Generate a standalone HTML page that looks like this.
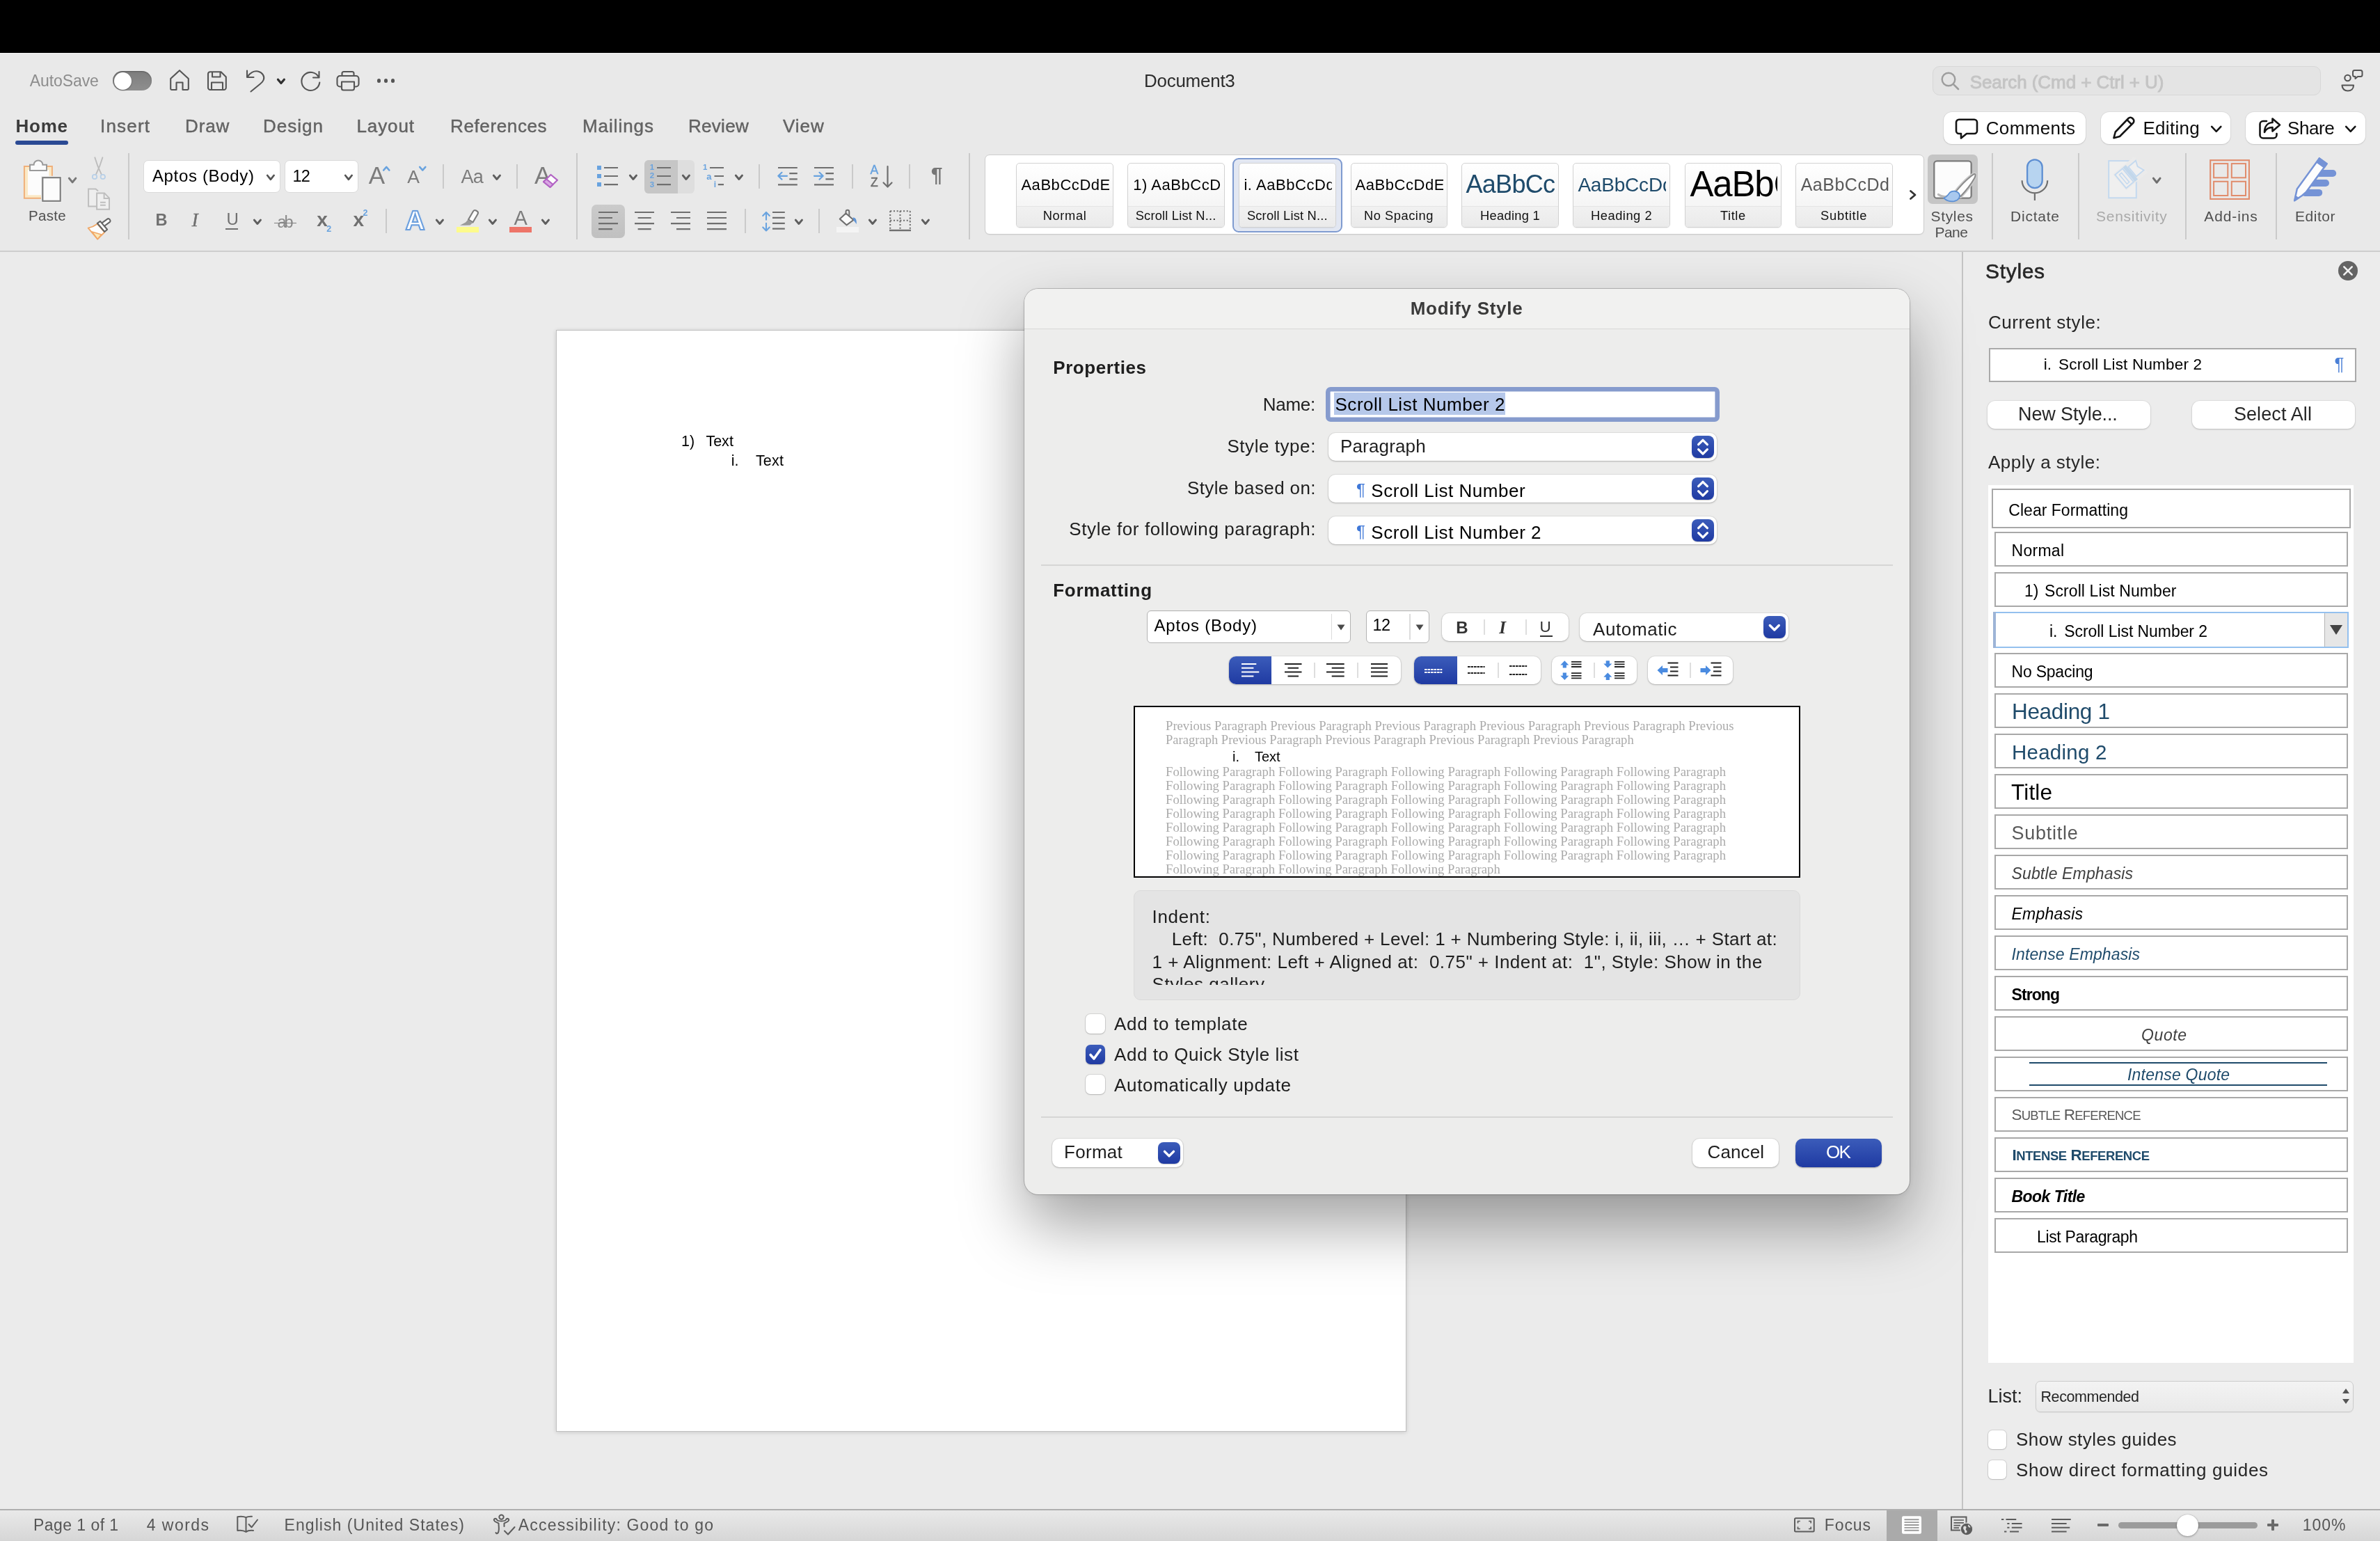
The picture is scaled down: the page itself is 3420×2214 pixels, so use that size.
<!DOCTYPE html>
<html lang="en"><head><meta charset="utf-8"><title>Document3 - Modify Style</title>
<style>
html,body{margin:0;padding:0}
body{width:3420px;height:2214px;position:relative;overflow:hidden;background:#ebebeb;font-family:"Liberation Sans",sans-serif;-webkit-font-smoothing:antialiased;will-change:transform}
body div,body span,body svg{position:absolute;box-sizing:border-box}
span{display:block}
svg{overflow:visible}
</style></head><body>
<div style="left:0px;top:76px;width:3420px;height:286px;background:#e9e9e9;border-top:1px solid #f7f7f7;border-bottom:2px solid #cdcdcd"></div>
<div style="left:0px;top:0px;width:3420px;height:76px;background:#000"></div>
<div style="left:0px;top:362px;width:2819px;height:1806px;background:#ebebeb"></div>
<div style="left:799px;top:474px;width:1222px;height:1583px;background:#fff;border:1px solid #c0c0c0;box-shadow:0 1px 6px rgba(0,0,0,.15)"></div>
<span style="left:979.00px;top:624.10px;font-size:21.5px;line-height:21.5px;color:#000;white-space:pre;">1)</span>
<span style="left:1014.40px;top:624.10px;font-size:21.5px;line-height:21.5px;color:#000;white-space:pre;letter-spacing:0.013px;">Text</span>
<span style="left:1050.70px;top:652.10px;font-size:21.5px;line-height:21.5px;color:#000;white-space:pre;">i.</span>
<span style="left:1085.90px;top:652.10px;font-size:21.5px;line-height:21.5px;color:#000;white-space:pre;letter-spacing:0.180px;">Text</span>
<span style="left:42.70px;top:104.53px;font-size:23px;line-height:23px;color:#8d8d8d;white-space:pre;letter-spacing:-0.074px;">AutoSave</span>
<span style="left:1644.00px;top:103.49px;font-size:26px;line-height:26px;color:#2d2d2d;white-space:pre;letter-spacing:-0.270px;">Document3</span>
<div style="left:2776.6px;top:94.7px;width:558.8px;height:42.3px;background:#e4e4e4;border:1.5px solid #d7d7d7;border-radius:10px"></div>
<span style="left:2830.70px;top:104.59px;font-size:26px;line-height:26px;color:#c4c4c4;white-space:pre;letter-spacing:-0.072px;-webkit-text-stroke:0.9px #c4c4c4;">Search (Cmd + Ctrl + U)</span>
<span style="left:22.50px;top:168.19px;font-size:26px;line-height:26px;color:#3c3c3c;white-space:pre;font-weight:700;letter-spacing:0.740px;">Home</span>
<span style="left:144.00px;top:168.19px;font-size:26px;line-height:26px;color:#636363;white-space:pre;letter-spacing:1.200px;-webkit-text-stroke:0.45px #636363;">Insert</span>
<span style="left:266.00px;top:168.19px;font-size:26px;line-height:26px;color:#636363;white-space:pre;letter-spacing:0.887px;-webkit-text-stroke:0.45px #636363;">Draw</span>
<span style="left:378.00px;top:168.19px;font-size:26px;line-height:26px;color:#636363;white-space:pre;letter-spacing:1.028px;-webkit-text-stroke:0.45px #636363;">Design</span>
<span style="left:512.50px;top:168.19px;font-size:26px;line-height:26px;color:#636363;white-space:pre;letter-spacing:0.900px;-webkit-text-stroke:0.45px #636363;">Layout</span>
<span style="left:647.00px;top:168.19px;font-size:26px;line-height:26px;color:#636363;white-space:pre;letter-spacing:0.627px;-webkit-text-stroke:0.45px #636363;">References</span>
<span style="left:837.00px;top:168.19px;font-size:26px;line-height:26px;color:#636363;white-space:pre;letter-spacing:0.940px;-webkit-text-stroke:0.45px #636363;">Mailings</span>
<span style="left:989.00px;top:168.19px;font-size:26px;line-height:26px;color:#636363;white-space:pre;letter-spacing:0.292px;-webkit-text-stroke:0.45px #636363;">Review</span>
<span style="left:1125.00px;top:168.19px;font-size:26px;line-height:26px;color:#636363;white-space:pre;letter-spacing:0.947px;-webkit-text-stroke:0.45px #636363;">View</span>
<div style="left:22px;top:202px;width:76px;height:5.5px;background:#2b4a94;border-radius:3px"></div>
<div style="left:2793px;top:161px;width:203.5px;height:45.5px;background:#fff;border-radius:12px;box-shadow:0 0 0 1px rgba(0,0,0,.05),0 1px 2px rgba(0,0,0,.10)"></div>
<div style="left:3019px;top:161px;width:185.5px;height:45.5px;background:#fff;border-radius:12px;box-shadow:0 0 0 1px rgba(0,0,0,.05),0 1px 2px rgba(0,0,0,.10)"></div>
<div style="left:3227px;top:161px;width:171.6px;height:45.5px;background:#fff;border-radius:12px;box-shadow:0 0 0 1px rgba(0,0,0,.05),0 1px 2px rgba(0,0,0,.10)"></div>
<span style="left:2853.70px;top:171.19px;font-size:26px;line-height:26px;color:#0c0c0c;white-space:pre;letter-spacing:0.374px;">Comments</span>
<span style="left:3079.50px;top:171.19px;font-size:26px;line-height:26px;color:#0c0c0c;white-space:pre;letter-spacing:0.273px;">Editing</span>
<span style="left:3287.00px;top:171.19px;font-size:26px;line-height:26px;color:#0c0c0c;white-space:pre;letter-spacing:-0.405px;">Share</span>
<div style="left:184.25px;top:220px;width:1.5px;height:123.5px;background:#cacaca"></div>
<div style="left:828.25px;top:220px;width:1.5px;height:123.5px;background:#cacaca"></div>
<div style="left:1392.25px;top:220px;width:1.5px;height:123.5px;background:#cacaca"></div>
<div style="left:2862.25px;top:220px;width:1.5px;height:123.5px;background:#cacaca"></div>
<div style="left:2986.25px;top:220px;width:1.5px;height:123.5px;background:#cacaca"></div>
<div style="left:3140.25px;top:220px;width:1.5px;height:123.5px;background:#cacaca"></div>
<div style="left:3270.25px;top:220px;width:1.5px;height:123.5px;background:#cacaca"></div>
<div style="left:636.45px;top:236.4px;width:1.5px;height:35.1px;background:#cacaca"></div>
<div style="left:742.25px;top:236.4px;width:1.5px;height:35.1px;background:#cacaca"></div>
<div style="left:1090.25px;top:236.4px;width:1.5px;height:35.1px;background:#cacaca"></div>
<div style="left:1224.25px;top:236.4px;width:1.5px;height:35.1px;background:#cacaca"></div>
<div style="left:1306.15px;top:236.4px;width:1.5px;height:35.1px;background:#cacaca"></div>
<div style="left:554.25px;top:300px;width:1.5px;height:35px;background:#cacaca"></div>
<div style="left:1070.25px;top:300px;width:1.5px;height:35px;background:#cacaca"></div>
<div style="left:1176.25px;top:300px;width:1.5px;height:35px;background:#cacaca"></div>
<span style="left:41.00px;top:300.04px;font-size:20.5px;line-height:20.5px;color:#4f4f4f;white-space:pre;letter-spacing:0.280px;">Paste</span>
<div style="left:206.4px;top:230.4px;width:197px;height:46.6px;background:#fff;border:1px solid #dadada;border-radius:7px"></div>
<div style="left:408.7px;top:230.4px;width:106.5px;height:46.6px;background:#fff;border:1px solid #dadada;border-radius:7px"></div>
<span style="left:218.90px;top:241.48px;font-size:24px;line-height:24px;color:#000;white-space:pre;letter-spacing:0.662px;">Aptos (Body)</span>
<span style="left:420.40px;top:241.90px;font-size:23.5px;line-height:23.5px;color:#000;white-space:pre;letter-spacing:-0.600px;">12</span>
<div style="left:925.8px;top:230px;width:71.9px;height:47.9px;background:#dedede;border-radius:6px"></div>
<div style="left:925.8px;top:230px;width:48px;height:47.9px;background:#c6c6c6;border-radius:6px 0 0 6px"></div>
<div style="left:850.2px;top:293.7px;width:47.6px;height:48px;background:linear-gradient(#cbcbcb,#c0c0c0);border-radius:7px"></div>
<div style="left:1414.6px;top:222.3px;width:1350.9px;height:115px;background:#fff;border:1px solid #cdcdcd;border-radius:7px;box-shadow:0 1px 1px rgba(0,0,0,.05)"></div>
<div style="left:1770.6px;top:226.5px;width:158.9px;height:107.2px;background:#e2e7f2;border:2px solid #7f9bd0;border-radius:9px"></div>
<div style="left:1460.4px;top:234px;width:139.4px;height:92.6px;background:linear-gradient(#fff,#f6f6f6 60%,#f3f3f3);border:1px solid #d2d2d2;border-radius:5px;overflow:hidden;box-shadow:0 1px 1px rgba(0,0,0,.06)"><div style="left:0;top:61px;width:140px;height:31px;background:linear-gradient(#f1f1f1,#eaeaea);border-top:1px solid #e4e4e4"></div></div>
<div style="left:1620.2px;top:234px;width:139.4px;height:92.6px;background:linear-gradient(#fff,#f6f6f6 60%,#f3f3f3);border:1px solid #d2d2d2;border-radius:5px;overflow:hidden;box-shadow:0 1px 1px rgba(0,0,0,.06)"><div style="left:0;top:61px;width:140px;height:31px;background:linear-gradient(#f1f1f1,#eaeaea);border-top:1px solid #e4e4e4"></div></div>
<div style="left:1780.4px;top:234px;width:139.4px;height:92.6px;background:linear-gradient(#fff,#f6f6f6 60%,#f3f3f3);border:1px solid #d2d2d2;border-radius:5px;overflow:hidden;box-shadow:0 1px 1px rgba(0,0,0,.06)"><div style="left:0;top:61px;width:140px;height:31px;background:linear-gradient(#f1f1f1,#eaeaea);border-top:1px solid #e4e4e4"></div></div>
<div style="left:1940.5px;top:234px;width:139.4px;height:92.6px;background:linear-gradient(#fff,#f6f6f6 60%,#f3f3f3);border:1px solid #d2d2d2;border-radius:5px;overflow:hidden;box-shadow:0 1px 1px rgba(0,0,0,.06)"><div style="left:0;top:61px;width:140px;height:31px;background:linear-gradient(#f1f1f1,#eaeaea);border-top:1px solid #e4e4e4"></div></div>
<div style="left:2100.2px;top:234px;width:139.4px;height:92.6px;background:linear-gradient(#fff,#f6f6f6 60%,#f3f3f3);border:1px solid #d2d2d2;border-radius:5px;overflow:hidden;box-shadow:0 1px 1px rgba(0,0,0,.06)"><div style="left:0;top:61px;width:140px;height:31px;background:linear-gradient(#f1f1f1,#eaeaea);border-top:1px solid #e4e4e4"></div></div>
<div style="left:2260.4px;top:234px;width:139.4px;height:92.6px;background:linear-gradient(#fff,#f6f6f6 60%,#f3f3f3);border:1px solid #d2d2d2;border-radius:5px;overflow:hidden;box-shadow:0 1px 1px rgba(0,0,0,.06)"><div style="left:0;top:61px;width:140px;height:31px;background:linear-gradient(#f1f1f1,#eaeaea);border-top:1px solid #e4e4e4"></div></div>
<div style="left:2420.5px;top:234px;width:139.4px;height:92.6px;background:linear-gradient(#fff,#f6f6f6 60%,#f3f3f3);border:1px solid #d2d2d2;border-radius:5px;overflow:hidden;box-shadow:0 1px 1px rgba(0,0,0,.06)"><div style="left:0;top:61px;width:140px;height:31px;background:linear-gradient(#f1f1f1,#eaeaea);border-top:1px solid #e4e4e4"></div></div>
<div style="left:2580.2px;top:234px;width:139.4px;height:92.6px;background:linear-gradient(#fff,#f6f6f6 60%,#f3f3f3);border:1px solid #d2d2d2;border-radius:5px;overflow:hidden;box-shadow:0 1px 1px rgba(0,0,0,.06)"><div style="left:0;top:61px;width:140px;height:31px;background:linear-gradient(#f1f1f1,#eaeaea);border-top:1px solid #e4e4e4"></div></div>
<div style="left:1461.4px;top:235px;width:132.5px;height:60px;overflow:hidden">
<span style="left:6.00px;top:20.37px;font-size:22px;line-height:22px;color:#000;white-space:pre;letter-spacing:0.550px;">AaBbCcDdEe</span>
</div>
<div style="left:1621.2px;top:235px;width:132.5px;height:60px;overflow:hidden">
<span style="left:7.00px;top:20.37px;font-size:22px;line-height:22px;color:#000;white-space:pre;letter-spacing:0.550px;">1) AaBbCcDd</span>
</div>
<div style="left:1781.4px;top:235px;width:132.5px;height:60px;overflow:hidden">
<span style="left:6.00px;top:20.37px;font-size:22px;line-height:22px;color:#000;white-space:pre;letter-spacing:0.550px;">i. AaBbCcDd</span>
</div>
<div style="left:1941.5px;top:235px;width:132.5px;height:60px;overflow:hidden">
<span style="left:6.00px;top:20.37px;font-size:22px;line-height:22px;color:#000;white-space:pre;letter-spacing:0.550px;">AaBbCcDdEe</span>
</div>
<div style="left:2101.2px;top:235px;width:132.5px;height:60px;overflow:hidden">
<span style="left:5.30px;top:12.42px;font-size:36px;line-height:36px;color:#1f4b6b;white-space:pre;letter-spacing:-0.700px;">AaBbCcDd</span>
</div>
<div style="left:2261.4px;top:235px;width:132.5px;height:60px;overflow:hidden">
<span style="left:6.00px;top:17.19px;font-size:28px;line-height:28px;color:#1f4b6b;white-space:pre;letter-spacing:-0.200px;">AaBbCcDdE</span>
</div>
<div style="left:2421.5px;top:235px;width:132.5px;height:60px;overflow:hidden">
<span style="left:7.00px;top:3.82px;font-size:51px;line-height:51px;color:#000;white-space:pre;letter-spacing:-1.200px;">AaBbCc</span>
</div>
<div style="left:2581.2px;top:235px;width:132.5px;height:60px;overflow:hidden">
<span style="left:6.50px;top:17.83px;font-size:25px;line-height:25px;color:#595959;white-space:pre;letter-spacing:0.500px;">AaBbCcDd</span>
</div>
<span style="left:1498.70px;top:300.71px;font-size:18.3px;line-height:18.3px;color:#111;white-space:pre;letter-spacing:0.635px;">Normal</span>
<span style="left:1631.70px;top:300.71px;font-size:18.3px;line-height:18.3px;color:#111;white-space:pre;letter-spacing:0.193px;">Scroll List N...</span>
<span style="left:1791.90px;top:300.71px;font-size:18.3px;line-height:18.3px;color:#111;white-space:pre;letter-spacing:0.193px;">Scroll List N...</span>
<span style="left:1960.00px;top:300.71px;font-size:18.3px;line-height:18.3px;color:#111;white-space:pre;letter-spacing:0.532px;">No Spacing</span>
<span style="left:2127.00px;top:300.71px;font-size:18.3px;line-height:18.3px;color:#111;white-space:pre;letter-spacing:0.294px;">Heading 1</span>
<span style="left:2286.00px;top:300.71px;font-size:18.3px;line-height:18.3px;color:#111;white-space:pre;letter-spacing:0.531px;">Heading 2</span>
<span style="left:2471.90px;top:300.71px;font-size:18.3px;line-height:18.3px;color:#111;white-space:pre;letter-spacing:0.611px;">Title</span>
<span style="left:2616.00px;top:300.71px;font-size:18.3px;line-height:18.3px;color:#111;white-space:pre;letter-spacing:0.783px;">Subtitle</span>
<div style="left:2770px;top:222.3px;width:72px;height:71.2px;background:#c5c5c5;border-radius:7px"></div>
<span style="left:2774.50px;top:299.62px;font-size:21px;line-height:21px;color:#4f4f4f;white-space:pre;letter-spacing:0.676px;">Styles</span>
<span style="left:2780.60px;top:323.22px;font-size:21px;line-height:21px;color:#4f4f4f;white-space:pre;letter-spacing:-0.580px;">Pane</span>
<span style="left:2889.00px;top:299.62px;font-size:21px;line-height:21px;color:#4f4f4f;white-space:pre;letter-spacing:0.782px;">Dictate</span>
<span style="left:3012.00px;top:299.62px;font-size:21px;line-height:21px;color:#a9a9a9;white-space:pre;letter-spacing:0.720px;">Sensitivity</span>
<span style="left:3167.30px;top:299.62px;font-size:21px;line-height:21px;color:#4f4f4f;white-space:pre;letter-spacing:0.885px;">Add-ins</span>
<span style="left:3298.00px;top:299.62px;font-size:21px;line-height:21px;color:#4f4f4f;white-space:pre;letter-spacing:0.538px;">Editor</span>
<div style="left:2819px;top:362px;width:601px;height:1806px;background:#ececec;border-left:2px solid #c3c3c3"></div>
<span style="left:2853.00px;top:374.60px;font-size:30px;line-height:30px;color:#262626;white-space:pre;letter-spacing:0.680px;-webkit-text-stroke:0.6px #262626;">Styles</span>
<svg style="left:3360px;top:375px;" width="28" height="28" viewBox="0 0 28 28"><circle cx="14" cy="14" r="14" fill="#646464"/><path d="M8.3 8.3 L19.7 19.7 M19.7 8.3 L8.3 19.7" stroke="#f2f2f2" stroke-width="2.6" stroke-linecap="round"/></svg>
<span style="left:2857.00px;top:449.79px;font-size:26px;line-height:26px;color:#262626;white-space:pre;letter-spacing:0.546px;">Current style:</span>
<div style="left:2858px;top:500px;width:528px;height:49.4px;background:#fff;border:2px solid #a9a9a9"></div>
<span style="left:2936.70px;top:513.25px;font-size:22.5px;line-height:22.5px;color:#000;white-space:pre;">i.</span>
<span style="left:2958.00px;top:513.25px;font-size:22.5px;line-height:22.5px;color:#000;white-space:pre;letter-spacing:0.184px;">Scroll List Number 2</span>
<span style="left:3354.60px;top:509.99px;font-size:26px;line-height:26px;color:#4a7fd6;white-space:pre;">¶</span>
<div style="left:2856px;top:576px;width:233.9px;height:39.7px;background:#fff;border-radius:11px;box-shadow:0 0 0 1px rgba(0,0,0,.04),0 1px 2.5px rgba(0,0,0,.18)"></div>
<div style="left:3150px;top:576px;width:234px;height:39.7px;background:#fff;border-radius:11px;box-shadow:0 0 0 1px rgba(0,0,0,.04),0 1px 2.5px rgba(0,0,0,.18)"></div>
<span style="left:2900.00px;top:581.94px;font-size:27px;line-height:27px;color:#262626;white-space:pre;letter-spacing:-0.110px;">New Style...</span>
<span style="left:3209.90px;top:581.94px;font-size:27px;line-height:27px;color:#262626;white-space:pre;letter-spacing:0.103px;">Select All</span>
<span style="left:2857.00px;top:650.99px;font-size:26px;line-height:26px;color:#262626;white-space:pre;letter-spacing:0.485px;">Apply a style:</span>
<div style="left:2857px;top:697px;width:525.4px;height:1261px;background:#fff"></div>
<div style="left:2862px;top:702px;width:516px;height:57px;border:2px solid #a8a8a8;background:#fff"></div>
<span style="left:2886.30px;top:722.03px;font-size:23px;line-height:23px;color:#000;white-space:pre;letter-spacing:0.023px;">Clear Formatting</span>
<div style="left:2866px;top:764px;width:508px;height:50px;border:2px solid #a8a8a8;background:#fff"></div>
<div style="left:2866px;top:822px;width:508px;height:50px;border:2px solid #a8a8a8;background:#fff"></div>
<div style="left:2864px;top:879px;width:511px;height:52px;border:2px solid #94c0ee;background:#fff"></div>
<div style="left:3340px;top:881px;width:33px;height:48px;background:#e6e6e6;border-left:1.5px solid #b5b5b5"></div>
<div style="left:2864px;top:879px;width:3.5px;height:52px;background:#9db4d6"></div>
<div style="left:2866px;top:938px;width:508px;height:50px;border:2px solid #a8a8a8;background:#fff"></div>
<div style="left:2866px;top:996px;width:508px;height:50px;border:2px solid #a8a8a8;background:#fff"></div>
<div style="left:2866px;top:1054px;width:508px;height:50px;border:2px solid #a8a8a8;background:#fff"></div>
<div style="left:2866px;top:1112px;width:508px;height:50px;border:2px solid #a8a8a8;background:#fff"></div>
<div style="left:2866px;top:1170px;width:508px;height:50px;border:2px solid #a8a8a8;background:#fff"></div>
<div style="left:2866px;top:1228px;width:508px;height:50px;border:2px solid #a8a8a8;background:#fff"></div>
<div style="left:2866px;top:1286px;width:508px;height:50px;border:2px solid #a8a8a8;background:#fff"></div>
<div style="left:2866px;top:1344px;width:508px;height:50px;border:2px solid #a8a8a8;background:#fff"></div>
<div style="left:2866px;top:1402px;width:508px;height:50px;border:2px solid #a8a8a8;background:#fff"></div>
<div style="left:2866px;top:1460px;width:508px;height:50px;border:2px solid #a8a8a8;background:#fff"></div>
<div style="left:2866px;top:1518px;width:508px;height:50px;border:2px solid #a8a8a8;background:#fff"></div>
<div style="left:2866px;top:1576px;width:508px;height:50px;border:2px solid #a8a8a8;background:#fff"></div>
<div style="left:2866px;top:1634px;width:508px;height:50px;border:2px solid #a8a8a8;background:#fff"></div>
<div style="left:2866px;top:1692px;width:508px;height:50px;border:2px solid #a8a8a8;background:#fff"></div>
<div style="left:2866px;top:1750px;width:508px;height:50px;border:2px solid #a8a8a8;background:#fff"></div>
<span style="left:2890.50px;top:780.23px;font-size:23px;line-height:23px;color:#000;white-space:pre;letter-spacing:0.288px;">Normal</span>
<span style="left:2909.00px;top:838.23px;font-size:23px;line-height:23px;color:#000;white-space:pre;">1)</span>
<span style="left:2938.00px;top:838.23px;font-size:23px;line-height:23px;color:#000;white-space:pre;letter-spacing:0.094px;">Scroll List Number</span>
<span style="left:2945.00px;top:896.23px;font-size:23px;line-height:23px;color:#000;white-space:pre;">i.</span>
<span style="left:2966.30px;top:896.23px;font-size:23px;line-height:23px;color:#000;white-space:pre;letter-spacing:-0.068px;">Scroll List Number 2</span>
<span style="left:2890.50px;top:954.23px;font-size:23px;line-height:23px;color:#000;white-space:pre;letter-spacing:-0.212px;">No Spacing</span>
<span style="left:2891.00px;top:1007.03px;font-size:31.5px;line-height:31.5px;color:#1f4b6b;white-space:pre;letter-spacing:-0.330px;">Heading 1</span>
<span style="left:2891.00px;top:1065.52px;font-size:29.5px;line-height:29.5px;color:#1f4b6b;white-space:pre;letter-spacing:0.248px;">Heading 2</span>
<span style="left:2890.00px;top:1122.63px;font-size:31.5px;line-height:31.5px;color:#000;white-space:pre;letter-spacing:0.181px;">Title</span>
<span style="left:2890.50px;top:1183.64px;font-size:27px;line-height:27px;color:#595959;white-space:pre;letter-spacing:0.760px;">Subtitle</span>
<span style="left:2890.50px;top:1243.53px;font-size:23px;line-height:23px;color:#404040;white-space:pre;font-style:italic;letter-spacing:0.143px;">Subtle Emphasis</span>
<span style="left:2890.50px;top:1301.53px;font-size:23px;line-height:23px;color:#000;white-space:pre;font-style:italic;letter-spacing:0.219px;">Emphasis</span>
<span style="left:2890.50px;top:1359.53px;font-size:23px;line-height:23px;color:#1f4b6b;white-space:pre;font-style:italic;letter-spacing:0.110px;">Intense Emphasis</span>
<span style="left:2890.50px;top:1417.53px;font-size:23px;line-height:23px;color:#000;white-space:pre;font-weight:700;letter-spacing:-0.912px;">Strong</span>
<span style="left:3077.00px;top:1475.53px;font-size:23px;line-height:23px;color:#404040;white-space:pre;font-style:italic;letter-spacing:0.610px;">Quote</span>
<div style="left:2916px;top:1526px;width:428px;height:2px;background:#1f4b6b"></div>
<div style="left:2916px;top:1558px;width:428px;height:2px;background:#1f4b6b"></div>
<span style="left:3057.00px;top:1533.03px;font-size:23px;line-height:23px;color:#1f4b6b;white-space:pre;font-style:italic;letter-spacing:0.213px;">Intense Quote</span>
<span style="left:2890.50px;top:1590.95px;font-size:22.5px;line-height:22.5px;color:#595959;white-space:pre;letter-spacing:-0.795px;">S<small style="font-size:18.5px;text-transform:uppercase">ubtle</small> R<small style="font-size:18.5px;text-transform:uppercase">eference</small></span>
<span style="left:2891.50px;top:1648.95px;font-size:22.5px;line-height:22.5px;color:#1f4b6b;white-space:pre;letter-spacing:-0.443px;font-weight:700;">I<small style="font-size:18.5px;text-transform:uppercase">ntense</small> R<small style="font-size:18.5px;text-transform:uppercase">eference</small></span>
<span style="left:2890.50px;top:1707.53px;font-size:23px;line-height:23px;color:#000;white-space:pre;font-weight:700;font-style:italic;letter-spacing:-0.540px;">Book Title</span>
<span style="left:2927.00px;top:1765.53px;font-size:23px;line-height:23px;color:#000;white-space:pre;letter-spacing:-0.346px;">List Paragraph</span>
<svg style="left:3347px;top:896.5px;" width="20" height="16" viewBox="0 0 20 16"><path d="M1 1 H19 L10 15 Z" fill="#444"/></svg>
<span style="left:2856.60px;top:1993.44px;font-size:27px;line-height:27px;color:#262626;white-space:pre;">List:</span>
<div style="left:2925px;top:1984px;width:457px;height:45px;background:linear-gradient(#f3f3f3,#e9e9e9);border:1.5px solid #cbcbcb;border-radius:7px;box-shadow:0 1px 1px rgba(0,0,0,.06)"></div>
<span style="left:2932.50px;top:1997.40px;font-size:21.5px;line-height:21.5px;color:#262626;white-space:pre;letter-spacing:-0.427px;">Recommended</span>
<svg style="left:3365px;top:1994px;" width="12" height="26" viewBox="0 0 12 26"><path d="M1 8 L6 1 L11 8 Z M1 16 L6 23 L11 16 Z" fill="#555"/></svg>
<div style="left:2856.6px;top:2054.6px;width:26.9px;height:27px;background:#fff;border-radius:6px;box-shadow:0 0 0 1px rgba(0,0,0,.10),0 1px 2px rgba(0,0,0,.12)"></div>
<div style="left:2856.6px;top:2098px;width:26.9px;height:27px;background:#fff;border-radius:6px;box-shadow:0 0 0 1px rgba(0,0,0,.10),0 1px 2px rgba(0,0,0,.12)"></div>
<span style="left:2897.00px;top:2054.99px;font-size:26px;line-height:26px;color:#262626;white-space:pre;letter-spacing:0.473px;">Show styles guides</span>
<span style="left:2897.00px;top:2098.99px;font-size:26px;line-height:26px;color:#262626;white-space:pre;letter-spacing:0.699px;">Show direct formatting guides</span>
<div style="left:0px;top:2168px;width:3420px;height:46px;background:linear-gradient(#e9e9e9,#d6d6d6);border-top:2px solid #afafaf"></div>
<span style="left:48.00px;top:2180.33px;font-size:23px;line-height:23px;color:#565656;white-space:pre;letter-spacing:0.447px;">Page 1 of 1</span>
<span style="left:210.70px;top:2180.33px;font-size:23px;line-height:23px;color:#565656;white-space:pre;letter-spacing:1.467px;">4 words</span>
<span style="left:408.60px;top:2180.33px;font-size:23px;line-height:23px;color:#565656;white-space:pre;letter-spacing:1.050px;">English (United States)</span>
<span style="left:744.80px;top:2180.33px;font-size:23px;line-height:23px;color:#565656;white-space:pre;letter-spacing:1.181px;">Accessibility: Good to go</span>
<span style="left:2621.80px;top:2180.33px;font-size:23px;line-height:23px;color:#565656;white-space:pre;letter-spacing:0.910px;">Focus</span>
<div style="left:2710.7px;top:2170px;width:73.3px;height:44px;background:#aaaaaa"></div>
<span style="left:3308.70px;top:2180.33px;font-size:23px;line-height:23px;color:#565656;white-space:pre;letter-spacing:0.973px;">100%</span>
<div style="left:3044px;top:2186.5px;width:200px;height:9px;background:#9b9b9b;border-radius:5px"></div>
<div style="left:3128px;top:2176px;width:31px;height:31px;background:#fff;border-radius:50%;box-shadow:0 0 1px rgba(0,0,0,.35),0 1px 3px rgba(0,0,0,.3)"></div>
<div style="left:3014px;top:2189px;width:15.6px;height:4px;background:#6a6a6a;border-radius:1px"></div>
<div style="left:3257.6px;top:2189px;width:16.4px;height:4px;background:#6a6a6a;border-radius:1px"></div>
<div style="left:3263.8px;top:2182.8px;width:4px;height:16.4px;background:#6a6a6a;border-radius:1px"></div>
<div style="left:1472px;top:415.3px;width:1272px;height:1300.7px;background:#ededec;border-radius:20px;box-shadow:0 0 0 1px rgba(0,0,0,.20),0 44px 92px rgba(0,0,0,.37),0 2px 8px rgba(0,0,0,.07);overflow:hidden"><div style="left:0;top:0;width:1272px;height:57.5px;background:#f1f1f0;border-bottom:1.5px solid #d9d9d8"></div></div>
<span style="left:2026.70px;top:429.99px;font-size:26px;line-height:26px;color:#3a3a3a;white-space:pre;font-weight:700;letter-spacing:0.715px;">Modify Style</span>
<span style="left:1513.30px;top:515.39px;font-size:26px;line-height:26px;color:#1e1e1e;white-space:pre;font-weight:700;letter-spacing:0.556px;">Properties</span>
<span style="left:1814.70px;top:567.59px;font-size:26px;line-height:26px;color:#1e1e1e;white-space:pre;letter-spacing:-0.250px;">Name:</span>
<span style="left:1763.40px;top:627.69px;font-size:26px;line-height:26px;color:#1e1e1e;white-space:pre;letter-spacing:0.558px;">Style type:</span>
<span style="left:1706.00px;top:687.99px;font-size:26px;line-height:26px;color:#1e1e1e;white-space:pre;letter-spacing:0.376px;">Style based on:</span>
<span style="left:1536.30px;top:747.49px;font-size:26px;line-height:26px;color:#1e1e1e;white-space:pre;letter-spacing:0.600px;">Style for following paragraph:</span>
<div style="left:1905px;top:556px;width:566px;height:50px;background:#fff;border-radius:7px;box-shadow:inset 0 0 0 6.6px #869bcd"></div>
<div style="left:1917.3px;top:564.3px;width:245.7px;height:31.4px;background:#b6c8ea"></div>
<span style="left:1918.50px;top:567.59px;font-size:26px;line-height:26px;color:#000;white-space:pre;letter-spacing:0.521px;">Scroll List Number 2</span>
<div style="left:1909px;top:622px;width:558px;height:40.2px;background:#fff;border-radius:10px;box-shadow:0 0 0 1px rgba(0,0,0,.05),0 1px 2.5px rgba(0,0,0,.22)"></div>
<div style="left:2431px;top:626px;width:32px;height:32px;background:linear-gradient(#3b5cba,#1f3aa2);border-radius:8px;box-shadow:0 1px 1px rgba(0,0,0,.2)"></div>
<svg style="left:2431px;top:626px;" width="32" height="32" viewBox="0 0 32 32"><path d="M9.6 12.7 L16.0 6.300000000000001 L22.4 12.7 M9.6 19.7 L16.0 26.1 L22.4 19.7" fill="none" stroke="#fff" stroke-width="3.2" stroke-linecap="round" stroke-linejoin="round"/></svg>
<span style="left:1926.00px;top:627.69px;font-size:26px;line-height:26px;color:#1e1e1e;white-space:pre;letter-spacing:0.160px;">Paragraph</span>
<div style="left:1909px;top:682px;width:558px;height:40.4px;background:#fff;border-radius:10px;box-shadow:0 0 0 1px rgba(0,0,0,.05),0 1px 2.5px rgba(0,0,0,.22)"></div>
<div style="left:2431px;top:686px;width:32px;height:32px;background:linear-gradient(#3b5cba,#1f3aa2);border-radius:8px;box-shadow:0 1px 1px rgba(0,0,0,.2)"></div>
<svg style="left:2431px;top:686px;" width="32" height="32" viewBox="0 0 32 32"><path d="M9.6 12.7 L16.0 6.300000000000001 L22.4 12.7 M9.6 19.7 L16.0 26.1 L22.4 19.7" fill="none" stroke="#fff" stroke-width="3.2" stroke-linecap="round" stroke-linejoin="round"/></svg>
<span style="left:1949.00px;top:692.18px;font-size:24px;line-height:24px;color:#3f78d8;white-space:pre;">¶</span>
<span style="left:1970.30px;top:691.99px;font-size:26px;line-height:26px;color:#000;white-space:pre;letter-spacing:0.528px;">Scroll List Number</span>
<div style="left:1909px;top:742px;width:558px;height:40.3px;background:#fff;border-radius:10px;box-shadow:0 0 0 1px rgba(0,0,0,.05),0 1px 2.5px rgba(0,0,0,.22)"></div>
<div style="left:2431px;top:746px;width:32px;height:32px;background:linear-gradient(#3b5cba,#1f3aa2);border-radius:8px;box-shadow:0 1px 1px rgba(0,0,0,.2)"></div>
<svg style="left:2431px;top:746px;" width="32" height="32" viewBox="0 0 32 32"><path d="M9.6 12.7 L16.0 6.300000000000001 L22.4 12.7 M9.6 19.7 L16.0 26.1 L22.4 19.7" fill="none" stroke="#fff" stroke-width="3.2" stroke-linecap="round" stroke-linejoin="round"/></svg>
<span style="left:1949.00px;top:752.18px;font-size:24px;line-height:24px;color:#3f78d8;white-space:pre;">¶</span>
<span style="left:1970.30px;top:751.99px;font-size:26px;line-height:26px;color:#000;white-space:pre;letter-spacing:0.537px;">Scroll List Number 2</span>
<div style="left:1496px;top:811px;width:1224px;height:2px;background:#d6d6d5"></div>
<span style="left:1513.30px;top:834.59px;font-size:26px;line-height:26px;color:#1e1e1e;white-space:pre;font-weight:700;letter-spacing:0.664px;">Formatting</span>
<div style="left:1648px;top:877px;width:293px;height:47px;background:#fff;border:1.5px solid #b4b4b4;border-radius:6px;box-shadow:inset 0 1px 1px rgba(0,0,0,.04)"></div>
<div style="left:1912.5px;top:882px;width:1.5px;height:37px;background:#dcdcdc"></div>
<span style="left:1658.50px;top:886.68px;font-size:24px;line-height:24px;color:#000;white-space:pre;letter-spacing:0.798px;">Aptos (Body)</span>
<svg style="left:1921px;top:896.5px;" width="12" height="9" viewBox="0 0 12 9"><path d="M0.5 0.5 H11.5 L6 8.5 Z" fill="#4a4a4a"/></svg>
<div style="left:1962.5px;top:877px;width:91.2px;height:47px;background:#fff;border:1.5px solid #b4b4b4;border-radius:6px;box-shadow:inset 0 1px 1px rgba(0,0,0,.04)"></div>
<div style="left:2025px;top:882px;width:1.5px;height:37px;background:#dcdcdc"></div>
<span style="left:1972.60px;top:887.10px;font-size:23.5px;line-height:23.5px;color:#000;white-space:pre;letter-spacing:-0.600px;">12</span>
<svg style="left:2033.5px;top:896.5px;" width="12" height="9" viewBox="0 0 12 9"><path d="M0.5 0.5 H11.5 L6 8.5 Z" fill="#4a4a4a"/></svg>
<div style="left:2071.8px;top:880.8px;width:182.2px;height:40.2px;background:#fff;border-radius:10px;box-shadow:0 0 0 1px rgba(0,0,0,.05),0 1px 2.5px rgba(0,0,0,.22)"></div>
<div style="left:2132px;top:890px;width:1.5px;height:22px;background:#dedede"></div>
<div style="left:2192px;top:890px;width:1.5px;height:22px;background:#dedede"></div>
<span style="left:2092.30px;top:889.68px;font-size:24px;line-height:24px;color:#333;white-space:pre;font-weight:700;">B</span>
<span style="left:2154.25px;top:889.07px;font-size:25px;line-height:25px;color:#333;white-space:pre;font-family:'Liberation Serif',serif;font-weight:700;font-style:italic;">I</span>
<span style="left:2212.50px;top:890.45px;font-size:22.5px;line-height:22.5px;color:#333;white-space:pre;">U</span>
<div style="left:2212.5px;top:913px;width:18.5px;height:2px;background:#333"></div>
<div style="left:2270px;top:880.8px;width:299.5px;height:40.2px;background:#fff;border-radius:10px;box-shadow:0 0 0 1px rgba(0,0,0,.05),0 1px 2.5px rgba(0,0,0,.22)"></div>
<div style="left:2534px;top:885px;width:31.6px;height:32px;background:linear-gradient(#3b5cba,#1f3aa2);border-radius:8px;box-shadow:0 1px 1px rgba(0,0,0,.2)"></div>
<svg style="left:2534px;top:885px;" width="31.6" height="32" viewBox="0 0 31.6 32"><path d="M9.299999999999955 13.5 L15.799999999999955 20.0 L22.299999999999955 13.5" fill="none" stroke="#fff" stroke-width="3.4" stroke-linecap="round" stroke-linejoin="round"/></svg>
<span style="left:2289.00px;top:890.99px;font-size:26px;line-height:26px;color:#1e1e1e;white-space:pre;letter-spacing:0.612px;">Automatic</span>
<div style="left:1766px;top:942.7px;width:246.6px;height:40.6px;background:#fff;border-radius:10px;box-shadow:0 0 0 1px rgba(0,0,0,.05),0 1px 2.5px rgba(0,0,0,.22)"></div>
<div style="left:1766px;top:942.7px;width:61.4px;height:40.6px;background:linear-gradient(#3b5cba,#1f3aa2);border-radius:10px 0 0 10px"></div>
<div style="left:1888.2px;top:952px;width:1.5px;height:22px;background:#dedede"></div>
<div style="left:1950px;top:952px;width:1.5px;height:22px;background:#dedede"></div>
<div style="left:2031.8px;top:942.7px;width:182.2px;height:40.6px;background:#fff;border-radius:10px;box-shadow:0 0 0 1px rgba(0,0,0,.05),0 1px 2.5px rgba(0,0,0,.22)"></div>
<div style="left:2031.8px;top:942.7px;width:61.9px;height:40.6px;background:linear-gradient(#3b5cba,#1f3aa2);border-radius:10px 0 0 10px"></div>
<div style="left:2152.2px;top:952px;width:1.5px;height:22px;background:#dedede"></div>
<div style="left:2230px;top:942.7px;width:122px;height:40.6px;background:#fff;border-radius:10px;box-shadow:0 0 0 1px rgba(0,0,0,.05),0 1px 2.5px rgba(0,0,0,.22)"></div>
<div style="left:2290.2px;top:952px;width:1.5px;height:22px;background:#dedede"></div>
<div style="left:2368px;top:942.7px;width:122px;height:40.6px;background:#fff;border-radius:10px;box-shadow:0 0 0 1px rgba(0,0,0,.05),0 1px 2.5px rgba(0,0,0,.22)"></div>
<div style="left:2428px;top:952px;width:1.5px;height:22px;background:#dedede"></div>
<div style="left:1629px;top:1014px;width:958px;height:247px;background:#fff;border:2.5px solid #000;overflow:hidden"></div>
<span style="left:1675.00px;top:1034.07px;font-size:18.67px;line-height:18.67px;color:#ababab;white-space:pre;font-family:'Liberation Serif',serif;">Previous Paragraph Previous Paragraph Previous Paragraph Previous Paragraph Previous Paragraph Previous</span>
<span style="left:1675.00px;top:1053.86px;font-size:18.56px;line-height:18.56px;color:#ababab;white-space:pre;font-family:'Liberation Serif',serif;">Paragraph Previous Paragraph Previous Paragraph Previous Paragraph Previous Paragraph</span>
<span style="left:1771.00px;top:1077.07px;font-size:20px;line-height:20px;color:#000;white-space:pre;">i.</span>
<span style="left:1803.00px;top:1077.07px;font-size:20px;line-height:20px;color:#000;white-space:pre;">Text</span>
<span style="left:1675.00px;top:1099.95px;font-size:18.69px;line-height:18.69px;color:#ababab;white-space:pre;font-family:'Liberation Serif',serif;">Following Paragraph Following Paragraph Following Paragraph Following Paragraph Following Paragraph</span>
<span style="left:1675.00px;top:1119.85px;font-size:18.69px;line-height:18.69px;color:#ababab;white-space:pre;font-family:'Liberation Serif',serif;">Following Paragraph Following Paragraph Following Paragraph Following Paragraph Following Paragraph</span>
<span style="left:1675.00px;top:1139.85px;font-size:18.69px;line-height:18.69px;color:#ababab;white-space:pre;font-family:'Liberation Serif',serif;">Following Paragraph Following Paragraph Following Paragraph Following Paragraph Following Paragraph</span>
<span style="left:1675.00px;top:1159.75px;font-size:18.69px;line-height:18.69px;color:#ababab;white-space:pre;font-family:'Liberation Serif',serif;">Following Paragraph Following Paragraph Following Paragraph Following Paragraph Following Paragraph</span>
<span style="left:1675.00px;top:1179.75px;font-size:18.69px;line-height:18.69px;color:#ababab;white-space:pre;font-family:'Liberation Serif',serif;">Following Paragraph Following Paragraph Following Paragraph Following Paragraph Following Paragraph</span>
<span style="left:1675.00px;top:1199.65px;font-size:18.69px;line-height:18.69px;color:#ababab;white-space:pre;font-family:'Liberation Serif',serif;">Following Paragraph Following Paragraph Following Paragraph Following Paragraph Following Paragraph</span>
<span style="left:1675.00px;top:1219.65px;font-size:18.69px;line-height:18.69px;color:#ababab;white-space:pre;font-family:'Liberation Serif',serif;">Following Paragraph Following Paragraph Following Paragraph Following Paragraph Following Paragraph</span>
<div style="left:1631.5px;top:1240px;width:953px;height:18.5px;overflow:hidden">
<span style="left:43.50px;top:-0.44px;font-size:18.68px;line-height:18.68px;color:#ababab;white-space:pre;font-family:'Liberation Serif',serif;">Following Paragraph Following Paragraph Following Paragraph</span>
</div>
<div style="left:1629px;top:1278.6px;width:958px;height:158.4px;background:#e4e4e4;border:1px solid #dadada;border-radius:10px"></div>
<div style="left:1640px;top:1290px;width:940px;height:125px;overflow:hidden">
<span style="left:15.60px;top:14.39px;font-size:26px;line-height:26px;color:#1e1e1e;white-space:pre;letter-spacing:0.640px;">Indent:</span>
<span style="left:43.80px;top:46.49px;font-size:26px;line-height:26px;color:#1e1e1e;white-space:pre;letter-spacing:0.357px;">Left:  0.75", Numbered + Level: 1 + Numbering Style: i, ii, iii, … + Start at:</span>
<span style="left:15.60px;top:78.59px;font-size:26px;line-height:26px;color:#1e1e1e;white-space:pre;letter-spacing:0.478px;">1 + Alignment: Left + Aligned at:  0.75" + Indent at:  1", Style: Show in the</span>
<span style="left:15.60px;top:110.69px;font-size:26px;line-height:26px;color:#1e1e1e;white-space:pre;letter-spacing:0.515px;">Styles gallery</span>
</div>
<div style="left:1560px;top:1456.5px;width:28px;height:28px;background:#fff;border-radius:7px;box-shadow:0 0 0 1px rgba(0,0,0,.10),0 1px 2px rgba(0,0,0,.15)"></div>
<div style="left:1560px;top:1500.5px;width:28px;height:28px;background:linear-gradient(#3b5cba,#1f3aa2);border-radius:7px;box-shadow:0 1px 1.5px rgba(0,0,0,.25)"></div>
<svg style="left:1560px;top:1500.5px;" width="28" height="28" viewBox="0 0 28 28"><path d="M7 14.5 L12 20 L21 7.5" fill="none" stroke="#fff" stroke-width="3.6" stroke-linecap="round" stroke-linejoin="round"/></svg>
<div style="left:1560px;top:1544.2px;width:28px;height:28px;background:#fff;border-radius:7px;box-shadow:0 0 0 1px rgba(0,0,0,.10),0 1px 2px rgba(0,0,0,.15)"></div>
<span style="left:1601.00px;top:1457.79px;font-size:26px;line-height:26px;color:#1e1e1e;white-space:pre;letter-spacing:0.679px;">Add to template</span>
<span style="left:1601.00px;top:1501.79px;font-size:26px;line-height:26px;color:#1e1e1e;white-space:pre;letter-spacing:0.546px;">Add to Quick Style list</span>
<span style="left:1601.00px;top:1545.59px;font-size:26px;line-height:26px;color:#1e1e1e;white-space:pre;letter-spacing:0.669px;">Automatically update</span>
<div style="left:1496px;top:1603.6px;width:1224px;height:2px;background:#d6d6d5"></div>
<div style="left:1511.5px;top:1636px;width:188.1px;height:40.7px;background:#fff;border-radius:10px;box-shadow:0 0 0 1px rgba(0,0,0,.05),0 1px 2.5px rgba(0,0,0,.22)"></div>
<div style="left:1664px;top:1640.6px;width:32px;height:31.8px;background:linear-gradient(#3b5cba,#1f3aa2);border-radius:8px;box-shadow:0 1px 1px rgba(0,0,0,.2)"></div>
<svg style="left:1664px;top:1640.6px;" width="32" height="31.8" viewBox="0 0 32 31.8"><path d="M9.5 13.400000000000091 L16.0 19.90000000000009 L22.5 13.400000000000091" fill="none" stroke="#fff" stroke-width="3.4" stroke-linecap="round" stroke-linejoin="round"/></svg>
<span style="left:1529.00px;top:1641.99px;font-size:26px;line-height:26px;color:#1e1e1e;white-space:pre;letter-spacing:0.296px;">Format</span>
<div style="left:2432px;top:1636px;width:124px;height:40.7px;background:#fff;border-radius:10px;box-shadow:0 0 0 1px rgba(0,0,0,.05),0 1px 2.5px rgba(0,0,0,.22)"></div>
<span style="left:2453.50px;top:1641.99px;font-size:26px;line-height:26px;color:#1e1e1e;white-space:pre;letter-spacing:0.128px;">Cancel</span>
<div style="left:2580px;top:1636px;width:124px;height:40.7px;background:linear-gradient(#3b5cba,#1f3aa2);border-radius:10px;box-shadow:0 1px 2px rgba(0,0,0,.3)"></div>
<span style="left:2624.00px;top:1641.99px;font-size:26px;line-height:26px;color:#fff;white-space:pre;letter-spacing:-1.840px;">OK</span>
<div style="left:162px;top:102px;width:56px;height:28px;background:linear-gradient(#7d7d7d,#8f8f8f);border-radius:14px;box-shadow:inset 0 1px 2px rgba(0,0,0,.3)"></div>
<div style="left:163.5px;top:103.5px;width:25px;height:25px;background:#fff;border-radius:50%;box-shadow:0 1px 2px rgba(0,0,0,.35)"></div>
<svg style="left:242px;top:98px;" width="32" height="34" viewBox="0 0 32 34"><path d="M3.2 15 L16 3.2 L28.8 15 V29.5 a1.5 1.5 0 0 1 -1.5 1.5 H20.5 V20.5 H11.5 V31 H4.7 a1.5 1.5 0 0 1 -1.5 -1.5 Z" fill="none" stroke="#555" stroke-width="2.1" stroke-linejoin="round" stroke-linecap="round"/></svg>
<svg style="left:296px;top:100px;" width="32" height="32" viewBox="0 0 32 32"><path d="M6 3.2 H21.5 L28.8 10.5 V26 a3 3 0 0 1 -3 3 H6 a3 3 0 0 1 -3 -3 V6.2 a3 3 0 0 1 3 -3 Z M9 3.5 V10.5 H20.5 V3.5 M8 28.5 V18.5 H24 V28.5" fill="none" stroke="#555" stroke-width="2.1" stroke-linejoin="round" stroke-linecap="round"/></svg>
<svg style="left:351px;top:98px;" width="32" height="36" viewBox="0 0 32 36"><path d="M4 3.5 V13 H13.5 M4.5 12.5 C8 6.5 14 3.5 19.5 4.5 C26 5.8 29.5 11.5 27.8 16.5 C27 19 25.5 20.5 23 22.5 L9.5 33.5" fill="none" stroke="#555" stroke-width="2.1" stroke-linejoin="round" stroke-linecap="round"/></svg>
<svg style="left:396.2px;top:110.5px;" width="15.8" height="11.8" viewBox="0 0 15.8 11.8"><path d="M3.44 3.2 L7.9 8.6 L12.36 3.2" fill="none" stroke="#2f2f2f" stroke-width="3.2" stroke-linecap="round" stroke-linejoin="round"/></svg>
<svg style="left:430px;top:99px;" width="32" height="34" viewBox="0 0 32 34"><path d="M28.5 4 V12.5 H20 M28 12 A13 13 0 1 0 29.3 19.5" fill="none" stroke="#555" stroke-width="2.1" stroke-linejoin="round" stroke-linecap="round"/></svg>
<svg style="left:482px;top:100px;" width="36" height="32" viewBox="0 0 36 32"><path d="M9.5 9 V5.5 a2.5 2.5 0 0 1 2.5 -2.5 H24 a2.5 2.5 0 0 1 2.5 2.5 V9 M9 24.5 H6.5 a4 4 0 0 1 -4 -4 V13 a4 4 0 0 1 4 -4 H29.5 a4 4 0 0 1 4 4 V20.5 a4 4 0 0 1 -4 4 H27 M9 17.5 H27 V27 a2.5 2.5 0 0 1 -2.5 2.5 H11.5 a2.5 2.5 0 0 1 -2.5 -2.5 Z" fill="none" stroke="#555" stroke-width="2.1" stroke-linejoin="round" stroke-linecap="round"/></svg>
<div style="left:541.9px;top:113.3px;width:5.4px;height:5.4px;background:#555;border-radius:50%"></div>
<div style="left:551.7px;top:113.3px;width:5.4px;height:5.4px;background:#555;border-radius:50%"></div>
<div style="left:561.5px;top:113.3px;width:5.4px;height:5.4px;background:#555;border-radius:50%"></div>
<svg style="left:2788px;top:102px;" width="30" height="30" viewBox="0 0 30 30"><circle cx="12" cy="12" r="9.3" fill="none" stroke="#9d9d9d" stroke-width="2.4"/><path d="M18.8 18.8 L26 26" stroke="#9d9d9d" stroke-width="2.6" stroke-linecap="round"/></svg>
<svg style="left:3362px;top:98px;" width="36" height="36" viewBox="0 0 36 36"><circle cx="11.5" cy="14" r="4.2" fill="none" stroke="#555" stroke-width="2.1"/><path d="M3.5 24.5 H20 a0 0 0 0 1 0 0 C20 29.5 16.5 32.5 11.75 32.5 C7 32.5 3.5 29.5 3.5 24.5 Z" fill="none" stroke="#555" stroke-width="2.1" stroke-linejoin="round"/><path d="M21.5 3 H30 a2.5 2.5 0 0 1 2.5 2.5 V9.5 a2.5 2.5 0 0 1 -2.5 2.5 H26 L22.5 15 V12 H21.5 a2.5 2.5 0 0 1 -2.5 -2.5 V5.5 a2.5 2.5 0 0 1 2.5 -2.5 Z" fill="none" stroke="#555" stroke-width="2" stroke-linejoin="round"/></svg>
<svg style="left:2808px;top:168px;" width="36" height="34" viewBox="0 0 36 34"><path d="M7 3.8 H29 a4 4 0 0 1 4 4 V20 a4 4 0 0 1 -4 4 H18 L10 30.5 V24 H7 a4 4 0 0 1 -4 -4 V7.8 a4 4 0 0 1 4 -4 Z" fill="none" stroke="#141414" stroke-width="2.6" stroke-linejoin="round" stroke-linecap="round"/></svg>
<svg style="left:3034px;top:165px;" width="36" height="36" viewBox="0 0 36 36"><path d="M24.5 5 a4 4 0 0 1 5.7 0 l1 1 a4 4 0 0 1 0 5.7 L12 31 L3.5 33.2 L5.8 24.5 Z M22.5 7.2 L29 13.7" fill="none" stroke="#141414" stroke-width="2.6" stroke-linejoin="round" stroke-linecap="round"/></svg>
<svg style="left:3174.65px;top:179.1px;" width="19.5" height="12.8" viewBox="0 0 19.5 12.8"><path d="M3.17 2.975 L9.75 9.825 L16.33 2.975" fill="none" stroke="#141414" stroke-width="2.6" stroke-linecap="round" stroke-linejoin="round"/></svg>
<svg style="left:3244px;top:166px;" width="36" height="36" viewBox="0 0 36 36"><path d="M13 8 H8 a4.5 4.5 0 0 0 -4.5 4.5 V28 a4.5 4.5 0 0 0 4.5 4.5 H23 a4.5 4.5 0 0 0 4.5 -4.5 V26 M21.5 4.5 L32 13.5 L21.5 22.5 V17 C15.5 17 12 19.5 10 24 C10 16 14 10.5 21.5 10 Z" fill="none" stroke="#141414" stroke-width="2.6" stroke-linejoin="round" stroke-linecap="round"/></svg>
<svg style="left:3368.25px;top:179.1px;" width="19.5" height="12.8" viewBox="0 0 19.5 12.8"><path d="M3.17 2.975 L9.75 9.825 L16.33 2.975" fill="none" stroke="#141414" stroke-width="2.6" stroke-linecap="round" stroke-linejoin="round"/></svg>
<svg style="left:30px;top:226px;" width="62" height="68" viewBox="0 0 62 68"><rect x="4.9" y="13" width="40" height="45.8" fill="#fbe9c6" stroke="#f0b07a" stroke-width="2"/><rect x="10" y="18" width="30.4" height="36.3" fill="#fcfcfc"/><path d="M13 19 V10.8 H18.6 a6.4 6.4 0 0 1 12.8 0 H37 V19 Z" fill="#fbfbfb" stroke="#9a9a9a" stroke-width="2"/><rect x="29" y="26.8" width="30.2" height="38.2" fill="#efefef"/><rect x="31.3" y="29.2" width="25.4" height="33.6" fill="#fcfcfc" stroke="#7b7b7b" stroke-width="2.1"/></svg>
<svg style="left:95.9px;top:253px;" width="16.2" height="12" viewBox="0 0 16.2 12"><path d="M3.35 3.125 L8.1 8.875 L12.85 3.125" fill="none" stroke="#777" stroke-width="3.0" stroke-linecap="round" stroke-linejoin="round"/></svg>
<svg style="left:128px;top:224px;" width="28" height="38" viewBox="0 0 28 38"><path d="M8.3 2.3 C11 12 14 19 17.8 26.6 M19.4 2.3 C16.7 12 13.7 19 9.9 26.6" stroke="#bdbdbd" stroke-width="1.9" fill="none" stroke-linecap="round"/><circle cx="8" cy="30" r="3.2" fill="none" stroke="#b8d0e8" stroke-width="1.8"/><circle cx="19.8" cy="30" r="3.2" fill="none" stroke="#b8d0e8" stroke-width="1.8"/></svg>
<svg style="left:124px;top:268px;" width="36" height="36" viewBox="0 0 36 36"><path d="M15 28.6 H3.1 V3.4 H13.5 L17 6.5" fill="#eeeeee" stroke="#bebebe" stroke-width="2"/><path d="M15.1 9.4 H26 L33 16.6 V32.7 H15.1 Z" fill="#efefef" stroke="#bebebe" stroke-width="2"/><path d="M25.6 9.8 V17 H32.6 M20 22.7 H27.8 M20 26.7 H27.8" fill="none" stroke="#bebebe" stroke-width="2"/></svg>
<svg style="left:124px;top:311px;" width="36" height="35" viewBox="0 0 36 35"><path d="M2.7 16.6 C8 15.5 12 13.5 15.8 10.7 L26.3 22.5 L16.2 32.6 Z" fill="#fdfdfd" stroke="#f0a868" stroke-width="1.9" stroke-linejoin="round"/><path d="M8.2 22.1 L21.7 25.9 L16.2 32.6 Z" fill="#fbe8b8" stroke="#f0a868" stroke-width="1.6" stroke-linejoin="round"/><path d="M21.7 9.8 L30.4 3.6 a2.2 2.2 0 0 1 3.1 0.5 l0.6 0.9 a2.2 2.2 0 0 1 -0.5 3.1 L25.6 14" fill="#fff" stroke="#646464" stroke-width="2.1" stroke-linejoin="round"/><path d="M15.8 9.8 L20 6.9 L30.1 18.7 L26.3 22 Z" fill="#fff" stroke="#646464" stroke-width="2.1" stroke-linejoin="round"/></svg>
<svg style="left:381.1px;top:249.3px;" width="15.8" height="11.8" viewBox="0 0 15.8 11.8"><path d="M3.215 3.0125 L7.9 8.7875 L12.585 3.0125" fill="none" stroke="#555" stroke-width="2.7" stroke-linecap="round" stroke-linejoin="round"/></svg>
<svg style="left:493.4px;top:249.3px;" width="15.8" height="11.8" viewBox="0 0 15.8 11.8"><path d="M3.215 3.0125 L7.9 8.7875 L12.585 3.0125" fill="none" stroke="#555" stroke-width="2.7" stroke-linecap="round" stroke-linejoin="round"/></svg>
<span style="left:529.70px;top:234.07px;font-size:35px;line-height:35px;color:#7c7c7c;white-space:pre;">A</span>
<svg style="left:547.75px;top:236.95px;" width="14.5" height="10.5" viewBox="0 0 14.5 10.5"><path d="M3.125 7.5625 L7.25 2.9375 L11.375 7.5625" fill="none" stroke="#69a3df" stroke-width="2.5" stroke-linecap="round" stroke-linejoin="round"/></svg>
<span style="left:585.30px;top:241.26px;font-size:26.5px;line-height:26.5px;color:#7c7c7c;white-space:pre;">A</span>
<svg style="left:599.55px;top:237.45px;" width="14.5" height="10.5" viewBox="0 0 14.5 10.5"><path d="M3.125 2.9375 L7.25 7.5625 L11.375 2.9375" fill="none" stroke="#69a3df" stroke-width="2.5" stroke-linecap="round" stroke-linejoin="round"/></svg>
<span style="left:662.60px;top:240.84px;font-size:27px;line-height:27px;color:#7c7c7c;white-space:pre;letter-spacing:-0.810px;">Aa</span>
<svg style="left:706.1px;top:249.4px;" width="15.8" height="11.6" viewBox="0 0 15.8 11.6"><path d="M3.35 3.125 L7.9 8.475 L12.45 3.125" fill="none" stroke="#5e5e5e" stroke-width="3.0" stroke-linecap="round" stroke-linejoin="round"/></svg>
<span style="left:768.00px;top:234.07px;font-size:35px;line-height:35px;color:#7c7c7c;white-space:pre;">A</span>
<svg style="left:778px;top:248px;" width="25" height="24" viewBox="0 0 25 24"><path d="M12.5 21 L3 13.2 L13.5 3 L23 10.8 Z" fill="#fdfdfd" stroke="#b263c4" stroke-width="2.2" stroke-linejoin="round"/><path d="M3 13.2 L7.2 9.2 L16.6 17 L12.5 21 Z" fill="#d9a6e3" stroke="#b263c4" stroke-width="2" stroke-linejoin="round"/></svg>
<span style="left:223.50px;top:305.10px;font-size:23.5px;line-height:23.5px;color:#707070;white-space:pre;font-weight:700;">B</span>
<span style="left:275.66px;top:302.81px;font-size:26.5px;line-height:26.5px;color:#707070;white-space:pre;font-family:'Liberation Serif',serif;font-style:italic;-webkit-text-stroke:0.5px #707070;">I</span>
<span style="left:325.40px;top:303.28px;font-size:24px;line-height:24px;color:#707070;white-space:pre;">U</span>
<div style="left:323.7px;top:327.6px;width:18.3px;height:2.1px;background:#707070"></div>
<svg style="left:362.1px;top:313.2px;" width="15.8" height="11.6" viewBox="0 0 15.8 11.6"><path d="M3.35 3.125 L7.9 8.475 L12.45 3.125" fill="none" stroke="#5e5e5e" stroke-width="3.0" stroke-linecap="round" stroke-linejoin="round"/></svg>
<span style="left:398.50px;top:307.70px;font-size:23.5px;line-height:23.5px;color:#8a8a8a;white-space:pre;letter-spacing:-2.985px;">ab</span>
<div style="left:394px;top:319.6px;width:32px;height:1.8px;background:#7d7d7d"></div>
<span style="left:455.30px;top:302.29px;font-size:28px;line-height:28px;color:#707070;white-space:pre;font-weight:700;">x</span>
<span style="left:469.30px;top:323.12px;font-size:12.5px;line-height:12.5px;color:#69a3df;white-space:pre;font-weight:700;">2</span>
<span style="left:507.40px;top:302.29px;font-size:28px;line-height:28px;color:#707070;white-space:pre;font-weight:700;">x</span>
<span style="left:521.60px;top:300.42px;font-size:12.5px;line-height:12.5px;color:#69a3df;white-space:pre;font-weight:700;">2</span>
<span style="left:582.60px;top:296.98px;font-size:39px;line-height:39px;color:#fff;white-space:pre;font-weight:700;-webkit-text-stroke:2px #6a9edd;text-shadow:0 0 2.5px #a9c9f0,0 0 2.5px #a9c9f0,0 0 1.5px #a9c9f0;">A</span>
<svg style="left:624.1px;top:313.2px;" width="15.8" height="11.6" viewBox="0 0 15.8 11.6"><path d="M3.35 3.125 L7.9 8.475 L12.45 3.125" fill="none" stroke="#5e5e5e" stroke-width="3.0" stroke-linecap="round" stroke-linejoin="round"/></svg>
<div style="left:656px;top:326px;width:32.2px;height:7.7px;background:#fdfb8c"></div>
<svg style="left:656px;top:298px;" width="34" height="28" viewBox="0 0 34 28"><path d="M17 17.5 L24 5.5 a3 3 0 0 1 4 -1 L29.5 5.4 a3 3 0 0 1 1 4 L23.5 21.5 Z" fill="#fbfbfb" stroke="#7c7c7c" stroke-width="2.1" stroke-linejoin="round"/><path d="M16.5 17.5 L23.5 21.8 L19.5 25.5 L12 25.8 L5 25.8 L13 21.5 Z" fill="#9a9a9a"/></svg>
<svg style="left:700.1px;top:313.2px;" width="15.8" height="11.6" viewBox="0 0 15.8 11.6"><path d="M3.35 3.125 L7.9 8.475 L12.45 3.125" fill="none" stroke="#5e5e5e" stroke-width="3.0" stroke-linecap="round" stroke-linejoin="round"/></svg>
<span style="left:738.60px;top:298.95px;font-size:29px;line-height:29px;color:#7c7c7c;white-space:pre;">A</span>
<div style="left:732px;top:326px;width:32.2px;height:7.7px;background:#ee7569"></div>
<svg style="left:776.1px;top:313.2px;" width="15.8" height="11.6" viewBox="0 0 15.8 11.6"><path d="M3.35 3.125 L7.9 8.475 L12.45 3.125" fill="none" stroke="#5e5e5e" stroke-width="3.0" stroke-linecap="round" stroke-linejoin="round"/></svg>
<div style="left:858.3px;top:238px;width:6px;height:6px;background:#69a3df"></div>
<div style="left:858.3px;top:250px;width:6px;height:6px;background:#69a3df"></div>
<div style="left:858.3px;top:262.2px;width:6px;height:6px;background:#69a3df"></div>
<svg style="left:866px;top:239px;" width="24" height="28.2" viewBox="0 0 24 28.2"><path d="M2 2H22M2 14H22M2 26.2H22" stroke="#6f6f6f" stroke-width="2.2" fill="none"/></svg>
<svg style="left:902.1px;top:249.4px;" width="15.8" height="11.6" viewBox="0 0 15.8 11.6"><path d="M3.35 3.125 L7.9 8.475 L12.45 3.125" fill="none" stroke="#5e5e5e" stroke-width="3.0" stroke-linecap="round" stroke-linejoin="round"/></svg>
<span style="left:933.80px;top:235.26px;font-size:11.5px;line-height:11.5px;color:#69a3df;white-space:pre;font-weight:700;">1</span>
<span style="left:933.80px;top:247.46px;font-size:11.5px;line-height:11.5px;color:#69a3df;white-space:pre;font-weight:700;">2</span>
<span style="left:933.80px;top:259.66px;font-size:11.5px;line-height:11.5px;color:#69a3df;white-space:pre;font-weight:700;">3</span>
<svg style="left:942px;top:239px;" width="24" height="28.2" viewBox="0 0 24 28.2"><path d="M2 2H22M2 14H22M2 26.2H22" stroke="#6f6f6f" stroke-width="2.2" fill="none"/></svg>
<svg style="left:978.1px;top:249.4px;" width="15.8" height="11.6" viewBox="0 0 15.8 11.6"><path d="M3.35 3.125 L7.9 8.475 L12.45 3.125" fill="none" stroke="#5e5e5e" stroke-width="3.0" stroke-linecap="round" stroke-linejoin="round"/></svg>
<span style="left:1010.00px;top:235.26px;font-size:11.5px;line-height:11.5px;color:#69a3df;white-space:pre;font-weight:700;">1</span>
<span style="left:1015.20px;top:246.59px;font-size:13px;line-height:13px;color:#69a3df;white-space:pre;font-weight:700;">a</span>
<span style="left:1025.80px;top:259.44px;font-size:12px;line-height:12px;color:#69a3df;white-space:pre;font-weight:700;">i</span>
<svg style="left:1018px;top:239px;" width="24" height="28.2" viewBox="0 0 24 28.2"><path d="M2 2H22M8.5 14H22M13.8 26.2H22" stroke="#6f6f6f" stroke-width="2.2" fill="none"/></svg>
<svg style="left:1054.1px;top:249.4px;" width="15.8" height="11.6" viewBox="0 0 15.8 11.6"><path d="M3.35 3.125 L7.9 8.475 L12.45 3.125" fill="none" stroke="#5e5e5e" stroke-width="3.0" stroke-linecap="round" stroke-linejoin="round"/></svg>
<svg style="left:858px;top:302.7px;" width="32" height="28.1" viewBox="0 0 32 28.1"><path d="M2 2H30M2 10H22M2 18.1H30M2 26.1H22" stroke="#6f6f6f" stroke-width="2.2" fill="none"/></svg>
<svg style="left:909.9px;top:302.7px;" width="32" height="28.1" viewBox="0 0 32 28.1"><path d="M2 2H30M6.6 10H25.7M2 18.1H30M6.6 26.1H25.7" stroke="#6f6f6f" stroke-width="2.2" fill="none"/></svg>
<svg style="left:962px;top:302.7px;" width="32" height="28.1" viewBox="0 0 32 28.1"><path d="M2 2H30M10 10H30M2 18.1H30M10 26.1H30" stroke="#6f6f6f" stroke-width="2.2" fill="none"/></svg>
<svg style="left:1014px;top:302.7px;" width="32" height="28.1" viewBox="0 0 32 28.1"><path d="M2 2H30M2 10H30M2 18.1H30M2 26.1H30" stroke="#6f6f6f" stroke-width="2.2" fill="none"/></svg>
<svg style="left:1116px;top:238.6px;" width="31.8" height="28.4" viewBox="0 0 31.8 28.4"><path d="M2 2H29.8M18.3 10.1H29.8M18.3 18.3H29.8M2 26.4H29.8" stroke="#6f6f6f" stroke-width="2.2" fill="none"/></svg>
<svg style="left:1116px;top:246px;" width="17" height="14" viewBox="0 0 17 14"><path d="M15 6.8 H2.5 M7.5 1.8 L2.3 6.8 L7.5 11.8" fill="none" stroke="#69a3df" stroke-width="2.2" stroke-linecap="round" stroke-linejoin="round"/></svg>
<svg style="left:1168px;top:238.6px;" width="32" height="28.4" viewBox="0 0 32 28.4"><path d="M2 2H30M18.4 10.1H30M18.4 18.3H30M2 26.4H30" stroke="#6f6f6f" stroke-width="2.2" fill="none"/></svg>
<svg style="left:1168px;top:246px;" width="17" height="14" viewBox="0 0 17 14"><path d="M2 6.8 H14.5 M9.5 1.8 L14.7 6.8 L9.5 11.8" fill="none" stroke="#69a3df" stroke-width="2.2" stroke-linecap="round" stroke-linejoin="round"/></svg>
<span style="left:1250.60px;top:236.18px;font-size:17.5px;line-height:17.5px;color:#69a3df;white-space:pre;-webkit-text-stroke:0.5px #69a3df;">A</span>
<span style="left:1251.00px;top:254.18px;font-size:17.5px;line-height:17.5px;color:#6f6f6f;white-space:pre;-webkit-text-stroke:0.5px #6f6f6f;">Z</span>
<svg style="left:1267px;top:236px;" width="17" height="36" viewBox="0 0 17 36"><path d="M8.5 3 V32 M2.5 26.5 L8.5 32.6 L14.5 26.5" fill="none" stroke="#6f6f6f" stroke-width="2.2" stroke-linecap="round" stroke-linejoin="round"/></svg>
<span style="left:1337.80px;top:236.10px;font-size:30px;line-height:30px;color:#767676;white-space:pre;font-weight:700;">¶</span>
<svg style="left:1108px;top:303.2px;" width="21.8" height="27.6" viewBox="0 0 21.8 27.6"><path d="M2 2H19.8M2 9.8H19.8M2 17.8H19.8M2 25.6H19.8" stroke="#6f6f6f" stroke-width="2.2" fill="none"/></svg>
<svg style="left:1094px;top:302px;" width="14" height="32" viewBox="0 0 14 32"><path d="M7 3 V13.8 M7 18.8 V29.5 M2.2 8 L7 3 L11.8 8 M2.2 24.5 L7 29.5 L11.8 24.5" fill="none" stroke="#69a3df" stroke-width="2.1" stroke-linecap="round" stroke-linejoin="round"/></svg>
<svg style="left:1140.1px;top:313.2px;" width="15.8" height="11.6" viewBox="0 0 15.8 11.6"><path d="M3.35 3.125 L7.9 8.475 L12.45 3.125" fill="none" stroke="#5e5e5e" stroke-width="3.0" stroke-linecap="round" stroke-linejoin="round"/></svg>
<div style="left:1202px;top:326px;width:32px;height:7.7px;background:#f4f4f4"></div>
<svg style="left:1204px;top:299px;" width="30" height="27" viewBox="0 0 30 27"><path d="M11.5 7.5 L22.5 17 L12.5 24.3 L2.8 15.6 Z" fill="#fbfbfb" stroke="#6f6f6f" stroke-width="2.1" stroke-linejoin="round"/><path d="M11.5 9.5 V5.2 a2.4 2.4 0 0 1 4.8 0 V12" fill="none" stroke="#6f6f6f" stroke-width="1.9"/><path d="M21.5 13.5 C25.5 13 27.2 16.5 26.8 23 C24.8 20.5 23.8 19 22.3 17 Z" fill="#5f94d6"/></svg>
<svg style="left:1245.9px;top:313.2px;" width="15.8" height="11.6" viewBox="0 0 15.8 11.6"><path d="M3.35 3.125 L7.9 8.475 L12.45 3.125" fill="none" stroke="#5e5e5e" stroke-width="3.0" stroke-linecap="round" stroke-linejoin="round"/></svg>
<svg style="left:1276px;top:300px;" width="34" height="34" viewBox="0 0 34 34"><path d="M3.2 3.2 H31.8 M3.2 3.2 V30 M31.8 3.2 V30 M17.5 3.2 V30 M3.2 16.8 H31.8" fill="none" stroke="#6f6f6f" stroke-width="2.1" stroke-dasharray="2.1 2.6"/><path d="M2 31 H33" stroke="#6f6f6f" stroke-width="2.4"/></svg>
<svg style="left:1322.1px;top:313.2px;" width="15.8" height="11.6" viewBox="0 0 15.8 11.6"><path d="M3.35 3.125 L7.9 8.475 L12.45 3.125" fill="none" stroke="#5e5e5e" stroke-width="3.0" stroke-linecap="round" stroke-linejoin="round"/></svg>
<svg style="left:2740px;top:270px;" width="18" height="20" viewBox="0 0 18 20"><path d="M5.5 4.5 L12 10 L5.5 15.5" fill="none" stroke="#333" stroke-width="2.8" stroke-linecap="round" stroke-linejoin="round"/></svg>
<svg style="left:2772px;top:224px;" width="70" height="70" viewBox="0 0 70 70"><rect x="7.3" y="7.3" width="53.4" height="53.4" rx="4" fill="#fcfcfc" stroke="#7c7c7c" stroke-width="2.3"/><path d="M64.5 26.2 C67.5 25 66.8 29 65.2 32 C60 41.5 53 50 45.5 58 L37.5 52.5 C45.5 42.5 54 33 64.5 26.2 Z" fill="#fdfdfd" stroke="#cdcdcd" stroke-width="5.2" stroke-linejoin="round"/><path d="M64.5 26.2 C67.5 25 66.8 29 65.2 32 C60 41.5 53 50 45.5 58 L37.5 52.5 C45.5 42.5 54 33 64.5 26.2 Z" fill="#fdfdfd" stroke="#8b8b8b" stroke-width="2" stroke-linejoin="round"/><path d="M13.5 55.5 C18 58.5 22 59.5 25.5 58" fill="none" stroke="#b8b8b8" stroke-width="3.2" stroke-linecap="round"/><path d="M21 60.5 C26 59.5 27 55.5 30 52.5 C33.5 49.5 40 50 43 54 C45.5 58.5 42.5 64 36 65.2 C30 66 24.5 64 21 60.5 Z" fill="#a9c8ee" stroke="#5b8fd4" stroke-width="1.7" stroke-linejoin="round"/></svg>
<svg style="left:2900px;top:224px;" width="48" height="68" viewBox="0 0 48 68"><rect x="13.1" y="5.3" width="21.6" height="40.9" rx="10.8" fill="#b7d4f0" stroke="#5e8fd2" stroke-width="2.3"/><path d="M5.6 35.2 a18.3 18.1 0 0 0 36.6 0 M23.9 53.3 V63.9" fill="none" stroke="#6f6f6f" stroke-width="2.2" stroke-linecap="butt"/></svg>
<svg style="left:3026px;top:222px;" width="60" height="68" viewBox="0 0 60 68"><rect x="4.2" y="9.1" width="39.6" height="53.2" fill="#efefef" stroke="#c4d9ef" stroke-width="2"/><g transform="translate(34.3 27.8) rotate(-40)"><rect x="-19" y="-15" width="40" height="30" fill="#ebebeb"/><rect x="-17" y="-12.5" width="14" height="25" fill="#efefef" stroke="#c4d9ef" stroke-width="1.9"/><rect x="-12.2" y="-8.6" width="4.2" height="17.2" fill="none" stroke="#c4d9ef" stroke-width="1.5"/><rect x="-1.6" y="-13.5" width="5.6" height="27" fill="#c2d7eb"/><path d="M5 -9 H19 L15.5 -1 L19 9 H5 Z" fill="#f0f0f0" stroke="#c4d9ef" stroke-width="1.8"/></g></svg>
<svg style="left:3090.8px;top:252.6px;" width="16.4" height="12.4" viewBox="0 0 16.4 12.4"><path d="M3.35 3.125 L8.2 9.275 L13.05 3.125" fill="none" stroke="#6f6f6f" stroke-width="3.0" stroke-linecap="round" stroke-linejoin="round"/></svg>
<svg style="left:3173px;top:227px;" width="62" height="62" viewBox="0 0 62 62"><rect x="3.2" y="3.2" width="55.7" height="55.7" fill="none" stroke="#e08c6c" stroke-width="2.1"/><rect x="8.1" y="8.1" width="20.2" height="20.2" fill="none" stroke="#e08c6c" stroke-width="2"/><rect x="8.1" y="33.8" width="20.2" height="20.2" fill="none" stroke="#e08c6c" stroke-width="2"/><rect x="33.8" y="8.1" width="20.2" height="20.2" fill="none" stroke="#e08c6c" stroke-width="2"/><rect x="33.8" y="33.8" width="20.2" height="20.2" fill="none" stroke="#e08c6c" stroke-width="2"/></svg>
<svg style="left:3294px;top:224px;" width="66" height="68" viewBox="0 0 66 68"><g fill="#7593d6"><rect x="30" y="19.9" width="33.2" height="10.1" rx="5.05"/><rect x="22" y="33.9" width="31" height="10.1" rx="5.05"/><rect x="13" y="47.9" width="30.2" height="10" rx="5"/></g><path d="M38.8 3.4 L49.6 11.3 L19.8 52 L14 57 L3.2 64.3 L6.8 47.6 Z" fill="#fdfdfd" stroke="#7593d6" stroke-width="2.5" stroke-linejoin="round"/><path d="M38.8 3.2 L49.8 11.2 L46 16.8 L35.8 9.4 Z" fill="#7593d6" stroke="#7593d6" stroke-width="2" stroke-linejoin="round"/><path d="M2.6 65 L4.4 57.2 L9.8 60.6 Z" fill="#7593d6" stroke="#7593d6" stroke-width="1" stroke-linejoin="round"/></svg>
<svg style="left:338px;top:2176px;" width="36" height="30" viewBox="0 0 36 30"><path d="M15.5 4.2 C12 2.6 7 2.6 3.3 3.2 V23 C7 22.4 12 22.6 15.5 25 V4.2 C17.5 3 20 2.6 24 2.8 M15.5 25 C18 23 22 22.6 26 23" fill="none" stroke="#5c5c5c" stroke-width="2" stroke-linejoin="round" stroke-linecap="round"/><path d="M19.5 14 L23.5 18.3 L32 7.5" fill="none" stroke="#5c5c5c" stroke-width="2" stroke-linejoin="round" stroke-linecap="round"/></svg>
<svg style="left:706px;top:2174px;" width="36" height="34" viewBox="0 0 36 34"><circle cx="14.5" cy="5.6" r="3.2" fill="none" stroke="#5c5c5c" stroke-width="2" stroke-linejoin="round" stroke-linecap="round"/><path d="M4 10.5 C3 8 6.5 6.5 8 9.5 C9 12 20 12 21 9.5 C22.5 6.5 26 8 25 10.5 C24 13 20 13.5 18.5 14.5 V19 M10.5 14.5 C9 13.5 5 13 4 10.5 M10.5 14.5 C10.5 20 11.5 21 10.5 26 C10 29.5 7 30 6.5 28" fill="none" stroke="#5c5c5c" stroke-width="2" stroke-linejoin="round" stroke-linecap="round"/><path d="M19 25.5 L24 30.5 L33.5 20" fill="none" stroke="#5c5c5c" stroke-width="2" stroke-linejoin="round" stroke-linecap="round"/></svg>
<svg style="left:2576px;top:2178px;" width="34" height="26" viewBox="0 0 34 26"><rect x="3" y="3.3" width="27.7" height="19.3" rx="1.5" fill="none" stroke="#5c5c5c" stroke-width="2" stroke-linejoin="round" stroke-linecap="round"/><path d="M7.5 10.5 V7.5 H10.8 M23 7.5 H26.2 V10.5 M26.2 15.5 V18.5 H23 M10.8 18.5 H7.5 V15.5" fill="none" stroke="#5c5c5c" stroke-width="1.7"/></svg>
<svg style="left:2730px;top:2176px;" width="34" height="30" viewBox="0 0 34 30"><rect x="3" y="2.2" width="28" height="25.6" rx="2.2" fill="#fff"/><path d="M6.5 7.2 H27.5 M6.5 11.1 H27.5 M6.5 15 H27.5 M6.5 18.9 H27.5 M6.5 22.8 H27.5" stroke="#9a9a9a" stroke-width="1.9"/></svg>
<svg style="left:2800px;top:2176px;" width="40" height="32" viewBox="0 0 40 32"><path d="M17 22.5 H4 V3.5 H25.5 V12" fill="none" stroke="#5c5c5c" stroke-width="2"/><path d="M7.5 8 H22 M7.5 11.8 H22 M7.5 15.6 H17 M7.5 19.2 H15" stroke="#5c5c5c" stroke-width="1.7"/><circle cx="26" cy="21" r="8.8" fill="#5c5c5c" stroke="#dcdcdc" stroke-width="1.2"/><path d="M21.5 17.5 C23 16 25 16.5 25.5 18 C26 19.5 24.5 20 24.8 21.5 C25.2 23 27 23 26.5 25 C26 26.5 24.5 27 23.5 26 C22.8 24.5 23.5 23.5 22.5 22.5 C21.5 21.5 20.5 19.5 21.5 17.5 Z M28 14.5 C29.5 15.5 31.5 17 31.5 18.5 C30 19 28.5 18 28 16.5 Z" fill="#dedede"/></svg>
<svg style="left:2874.14px;top:2181.11px;" width="33.5803" height="21.5633" viewBox="0 0 33.5803 21.5633"><path d="M2 2H5.32779M8.4707 2H23.2609M10.3195 7.91607H13.4624M16.7902 7.91607H31.5803M10.3195 13.6473H13.4624M16.7902 13.6473H31.5803M6.0673 19.5633H9.39508M14.017 19.5633H26.9584" stroke="#5c5c5c" stroke-width="2" fill="none"/></svg>
<svg style="left:2945.87px;top:2181.11px;" width="31.7316" height="21.5633" viewBox="0 0 31.7316 21.5633"><path d="M2 2H29.7316M2 7.91607H23.6306M2 13.6473H28.2525M2 19.5633H23.6306" stroke="#5c5c5c" stroke-width="2" fill="none"/></svg>
<svg style="left:1782.2px;top:952px;" width="29.3" height="21.4" viewBox="0 0 29.3 21.4"><path d="M2 2H23.3M2 7.8H19.4M2 13.6H27.3M2 19.4H19.4" stroke="#fff" stroke-width="2" fill="none"/></svg>
<svg style="left:1843.5px;top:952px;" width="28.5" height="21.4" viewBox="0 0 28.5 21.4"><path d="M2 2H26.5M6.5 7.8H22M2 13.6H26.5M6.5 19.4H22" stroke="#222" stroke-width="2" fill="none"/></svg>
<svg style="left:1904px;top:952px;" width="29.7" height="21.4" viewBox="0 0 29.7 21.4"><path d="M2 2H27.7M9.7 7.8H27.7M2 13.6H27.7M9.7 19.4H27.7" stroke="#222" stroke-width="2" fill="none"/></svg>
<svg style="left:1968px;top:952px;" width="28" height="21.4" viewBox="0 0 28 21.4"><path d="M2 2H26M2 7.8H26M2 13.6H26M2 19.4H26" stroke="#222" stroke-width="2" fill="none"/></svg>
<svg style="left:2047.4px;top:959.7px;" width="25.3" height="4" viewBox="0 0 25.3 4"><path d="M0 2 H25.3" stroke="#fff" stroke-width="2" stroke-dasharray="3.6 0.9"/></svg>
<svg style="left:2047.4px;top:963.7px;" width="25.3" height="4" viewBox="0 0 25.3 4"><path d="M0 2 H25.3" stroke="#fff" stroke-width="2" stroke-dasharray="3.6 0.9"/></svg>
<svg style="left:2108.7px;top:955.7px;" width="24.6" height="4" viewBox="0 0 24.6 4"><path d="M0 2 H24.6" stroke="#222" stroke-width="2" stroke-dasharray="3.6 0.9"/></svg>
<svg style="left:2108.7px;top:965.2px;" width="24.6" height="4" viewBox="0 0 24.6 4"><path d="M0 2 H24.6" stroke="#222" stroke-width="2" stroke-dasharray="3.6 0.9"/></svg>
<svg style="left:2169.4px;top:954.7px;" width="25.2" height="4" viewBox="0 0 25.2 4"><path d="M0 2 H25.2" stroke="#222" stroke-width="2" stroke-dasharray="3.6 0.9"/></svg>
<svg style="left:2169.4px;top:966.8px;" width="25.2" height="4" viewBox="0 0 25.2 4"><path d="M0 2 H25.2" stroke="#222" stroke-width="2" stroke-dasharray="3.6 0.9"/></svg>
<svg style="left:2241.8px;top:947px;" width="34" height="33" viewBox="0 0 34 33"><path d="M6 0 L12 6.2 H8.6 V10.4 H3.4 V6.2 H0 Z" transform="translate(0.3 2.2)" fill="#4a8be0"/><path d="M6 10.4 L12 4.2 H8.6 V0 H3.4 V4.2 H0 Z" transform="translate(0.3 19.5)" fill="#4a8be0"/><path d="M16 3.8 H30.5 M16 7.4 H30.5 M16 11 H30.5 M16 20.2 H30.5 M16 23.8 H30.5 M16 27.4 H30.5" stroke="#222" stroke-width="1.8"/></svg>
<svg style="left:2304px;top:947px;" width="34" height="33" viewBox="0 0 34 33"><path d="M6 10.4 L12 4.2 H8.6 V0 H3.4 V4.2 H0 Z" transform="translate(0.3 2.2)" fill="#4a8be0"/><path d="M6 0 L12 6.2 H8.6 V10.4 H3.4 V6.2 H0 Z" transform="translate(0.3 19.5)" fill="#4a8be0"/><path d="M16 3.8 H30.5 M16 7.4 H30.5 M16 11 H30.5 M16 20.2 H30.5 M16 23.8 H30.5 M16 27.4 H30.5" stroke="#222" stroke-width="1.8"/></svg>
<svg style="left:2381px;top:949px;" width="34" height="29" viewBox="0 0 34 29"><path d="M0 7 L7.5 0 V4 H15 V10 H7.5 V14 Z" transform="translate(0.5 7)" fill="#4a8be0"/><path d="M15.5 3.5 H30.5 M19 9.5 H30.5 M19 15.5 H30.5 M15.5 21.5 H30.5" stroke="#222" stroke-width="1.9"/></svg>
<svg style="left:2443.3px;top:949px;" width="34" height="29" viewBox="0 0 34 29"><path d="M15 7 L7.5 0 V4 H0 V10 H7.5 V14 Z" transform="translate(0.5 7)" fill="#4a8be0"/><path d="M15.5 3.5 H30.5 M19 9.5 H30.5 M19 15.5 H30.5 M15.5 21.5 H30.5" stroke="#222" stroke-width="1.9"/></svg>
</body></html>
